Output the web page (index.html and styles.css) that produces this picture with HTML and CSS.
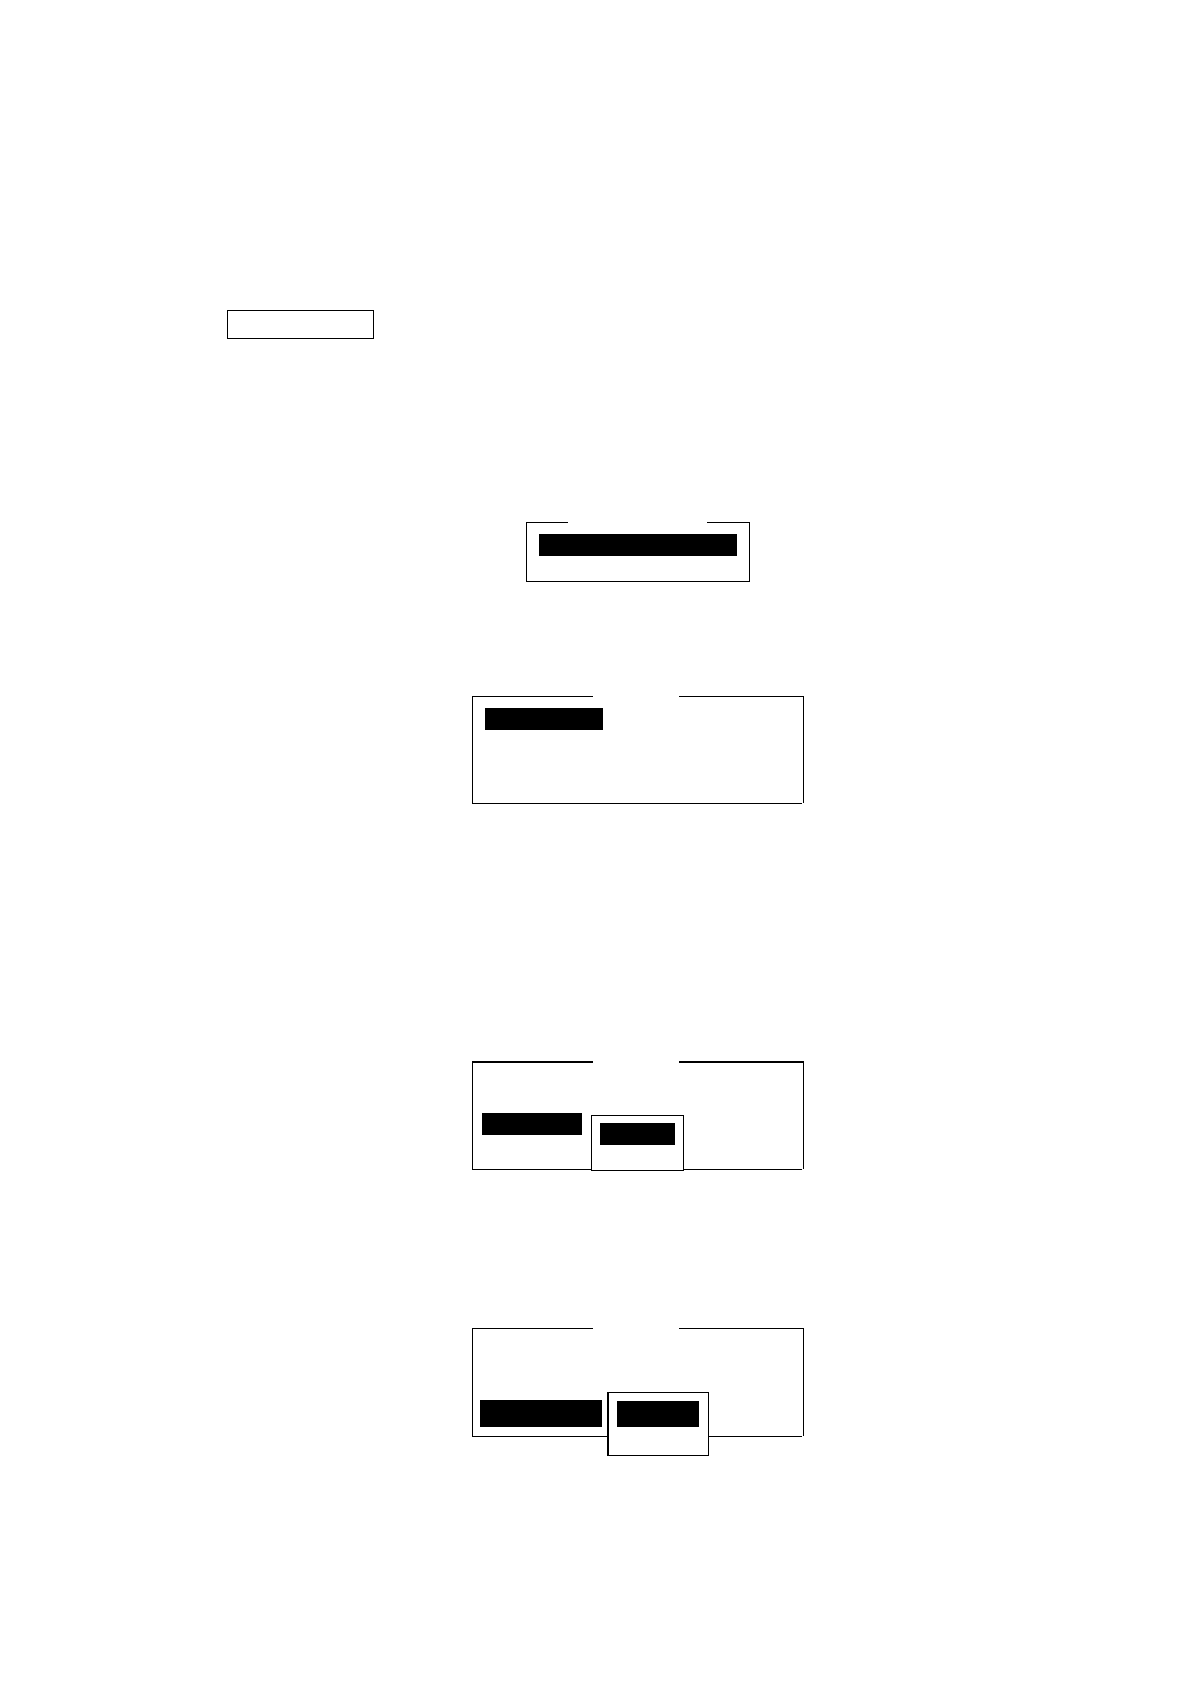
FILE: index.html
```
<!DOCTYPE html>
<html lang="en">
    <head>
        <meta charset="utf-8">
        <title>Menu</title>
        <meta name="viewport" content="width=device-width, initial-scale=1">
        <link rel="stylesheet" href="styles.css">
    </head>
    <body>
        <main class="page">
            <div class="heading"></div>
            <div class="menus">
                <section class="menu small">
                    <div class="title"></div>
                    <div class="row selected"></div>
                    <div class="row"></div>
                </section>
                <section class="menu wide first">
                    <div class="title"></div>
                    <div class="row selected"></div>
                    <div class="row"></div>
                    <div class="row"></div>
                    <div class="row"></div>
                </section>
                <section class="menu wide second">
                    <div class="title"></div>
                    <div class="row"></div>
                    <div class="row"></div>
                    <div class="row selected"></div>
                    <div class="row"></div>
                    <div class="popup">
                        <div class="row selected"></div>
                        <div class="row"></div>
                    </div>
                </section>
                <section class="menu wide third">
                    <div class="title"></div>
                    <div class="row"></div>
                    <div class="row"></div>
                    <div class="row"></div>
                    <div class="row selected"></div>
                    <div class="popup">
                        <div class="row selected"></div>
                        <div class="row"></div>
                    </div>
                </section>
            </div>
        </main>
    </body>
</html>
```
FILE: styles.css
```
*{
    box-sizing: border-box;
}
body{
    margin: 0px;
    background: #ffffff;
    font-family: "Liberation Sans", Arial, sans-serif;
}
.page{
    padding: 310px 0px 80px 0px;
}
.heading{
    width: 147px;
    height: 29px;
    margin-left: 227px;
    border: 1px solid #000000;
}
.menus{
    display: flex;
    flex-direction: column;
    align-items: center;
    padding: 183px 0px 0px 86px;
}
.menu{
    position: relative;
    width: 100%;
    border: 1px solid #000000;
}
.row{
    height: 22px;
}
.selected{
    background: #000000;
}
/* break in the top border */
.title{
    height: 2px;
    background: #ffffff;
}
.small{
    max-width: 224px;
    padding: 0px 12px 3px 12px;
}
.small .title{
    width: 139px;
    margin: -2px 0px 11px 29px;
}
.wide{
    max-width: 332px;
}
.wide .title{
    width: 86px;
    margin-top: -2px;
    margin-left: 120px;
}
/* open corner at the bottom right */
.wide::after{
    content: '';
    position: absolute;
    right: -1px;
    bottom: -1px;
    width: 2px;
    height: 1px;
    background: #ffffff;
}
.first{
    margin-top: 114px;
    padding: 0px 12px 7px 12px;
}
.first .title{
    margin-left: 108px;
    margin-bottom: 11px;
}
.first .selected{
    width: 118px;
}
.second{
    margin-top: 257px;
    padding-bottom: 12px;
    border-top-width: 2px;
}
.second .title{
    margin-bottom: 6px;
}
.second > .selected{
    width: 100px;
    margin-left: 9px;
}
.third{
    margin-top: 158px;
    padding-bottom: 9px;
}
.third .title{
    margin-bottom: 5px;
}
.third > .selected{
    width: 122px;
    height: 27px;
    margin-left: 7px;
}
.popup{
    position: absolute;
    z-index: 1;
    border: 1px solid #000000;
    background: #ffffff;
}
.second .popup{
    top: 52px;
    left: 118px;
    width: 93px;
    padding: 7px 8px 3px 8px;
}
.third .popup{
    top: 63px;
    left: 134px;
    width: 102px;
    padding: 8px 9px 6px 8px;
    border-left-width: 2px;
}
.third .popup .selected{
    height: 26px;
}
```
